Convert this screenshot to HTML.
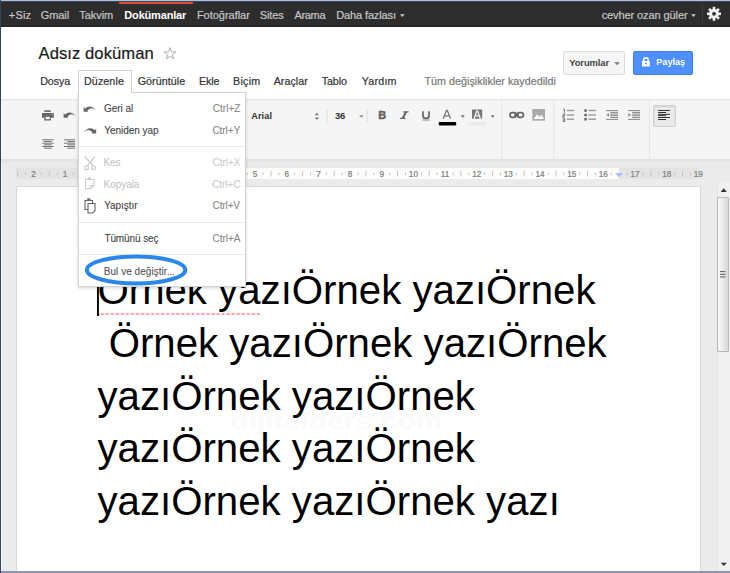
<!DOCTYPE html>
<html><head><meta charset="utf-8"><style>
html,body{margin:0;padding:0;width:730px;height:573px;overflow:hidden;background:#fff;font-family:"Liberation Sans", sans-serif;}
</style></head><body>
<div style="position:absolute;left:0px;top:0px;width:730px;height:1px;background:#b4bfd2"></div><div style="position:absolute;left:0px;top:1px;width:730px;height:1px;background:#3a4763"></div><div style="position:absolute;left:1px;top:2px;width:729px;height:25px;background:#2d2d2d"></div><div style="position:absolute;left:1px;top:25px;width:729px;height:2px;background:#262626"></div><div style="position:absolute;left:119px;top:2px;width:74px;height:2px;background:#dd4b39"></div><div style="position:absolute;left:8.86px;top:9.59px;font-size:11px;line-height:11px;height:11px;color:#c8c8c8;font-weight:normal;white-space:pre;-webkit-text-stroke:0.2px #c8c8c8;letter-spacing:0.143px">+Siz</div><div style="position:absolute;left:40.85px;top:9.59px;font-size:11px;line-height:11px;height:11px;color:#c8c8c8;font-weight:normal;white-space:pre;-webkit-text-stroke:0.2px #c8c8c8;letter-spacing:-0.109px">Gmail</div><div style="position:absolute;left:79.25px;top:9.59px;font-size:11px;line-height:11px;height:11px;color:#c8c8c8;font-weight:normal;white-space:pre;-webkit-text-stroke:0.2px #c8c8c8;letter-spacing:-0.054px">Takvim</div><div style="position:absolute;left:124.36px;top:9.59px;font-size:11px;line-height:11px;height:11px;color:#ffffff;font-weight:bold;white-space:pre;letter-spacing:-0.186px">Dokümanlar</div><div style="position:absolute;left:196.90px;top:9.59px;font-size:11px;line-height:11px;height:11px;color:#c8c8c8;font-weight:normal;white-space:pre;-webkit-text-stroke:0.2px #c8c8c8;letter-spacing:-0.020px">Fotoğraflar</div><div style="position:absolute;left:259.80px;top:9.59px;font-size:11px;line-height:11px;height:11px;color:#c8c8c8;font-weight:normal;white-space:pre;-webkit-text-stroke:0.2px #c8c8c8;letter-spacing:-0.114px">Sites</div><div style="position:absolute;left:294.38px;top:9.59px;font-size:11px;line-height:11px;height:11px;color:#c8c8c8;font-weight:normal;white-space:pre;-webkit-text-stroke:0.2px #c8c8c8;letter-spacing:-0.319px">Arama</div><div style="position:absolute;left:336.30px;top:9.59px;font-size:11px;line-height:11px;height:11px;color:#c8c8c8;font-weight:normal;white-space:pre;-webkit-text-stroke:0.2px #c8c8c8;letter-spacing:-0.136px">Daha fazlası</div><div style="position:absolute;left:601.63px;top:9.59px;font-size:11px;line-height:11px;height:11px;color:#c8c8c8;font-weight:normal;white-space:pre;-webkit-text-stroke:0.2px #c8c8c8;letter-spacing:-0.093px">cevher ozan güler</div><div style="position:absolute;left:702px;top:4px;width:1px;height:19px;background:#3d3d3d"></div><svg style="position:absolute;left:0;top:0" width="730" height="573" viewBox="0 0 730 573"><path d="M399.9 14.3h4.8l-2.4 2.7z" fill="#c8c8c8"/><path d="M691.1 14.3h4.8l-2.4 2.7z" fill="#c8c8c8"/><g transform="translate(714 13.8)" fill="#f0f0f0"><rect x="-1.3" y="-7" width="2.6" height="4" transform="rotate(0)"/><rect x="-1.3" y="-7" width="2.6" height="4" transform="rotate(45)"/><rect x="-1.3" y="-7" width="2.6" height="4" transform="rotate(90)"/><rect x="-1.3" y="-7" width="2.6" height="4" transform="rotate(135)"/><rect x="-1.3" y="-7" width="2.6" height="4" transform="rotate(180)"/><rect x="-1.3" y="-7" width="2.6" height="4" transform="rotate(225)"/><rect x="-1.3" y="-7" width="2.6" height="4" transform="rotate(270)"/><rect x="-1.3" y="-7" width="2.6" height="4" transform="rotate(315)"/><circle r="4.9"/><circle r="1.9" fill="#2d2d2d"/></g></svg><div style="position:absolute;left:1px;top:27px;width:729px;height:72px;background:#ffffff"></div><div style="position:absolute;left:38.57px;top:45.95px;font-size:16.6px;line-height:16.6px;height:16.6px;color:#1a1a1a;font-weight:normal;white-space:pre;-webkit-text-stroke:0.2px #1a1a1a;letter-spacing:0.066px">Adsız doküman</div><svg style="position:absolute;left:0;top:0" width="730" height="573" viewBox="0 0 730 573"><path d="M170 47.6l1.55 4.3h4.55l-3.7 2.75 1.4 4.35-3.8-2.7-3.8 2.7 1.4-4.35-3.7-2.75h4.55z" fill="none" stroke="#aaa" stroke-width="0.9" stroke-linejoin="miter"/></svg><div style="position:absolute;left:40.22px;top:76.34px;font-size:10.7px;line-height:10.7px;height:10.7px;color:#333;font-weight:normal;white-space:pre;-webkit-text-stroke:0.2px #333;letter-spacing:-0.088px">Dosya</div><div style="position:absolute;left:137.66px;top:76.34px;font-size:10.7px;line-height:10.7px;height:10.7px;color:#333;font-weight:normal;white-space:pre;-webkit-text-stroke:0.2px #333;letter-spacing:0.065px">Görüntüle</div><div style="position:absolute;left:199.02px;top:76.34px;font-size:10.7px;line-height:10.7px;height:10.7px;color:#333;font-weight:normal;white-space:pre;-webkit-text-stroke:0.2px #333;letter-spacing:-0.154px">Ekle</div><div style="position:absolute;left:233.02px;top:76.34px;font-size:10.7px;line-height:10.7px;height:10.7px;color:#333;font-weight:normal;white-space:pre;-webkit-text-stroke:0.2px #333;letter-spacing:0.257px">Biçim</div><div style="position:absolute;left:273.68px;top:76.34px;font-size:10.7px;line-height:10.7px;height:10.7px;color:#333;font-weight:normal;white-space:pre;-webkit-text-stroke:0.2px #333;letter-spacing:0.051px">Araçlar</div><div style="position:absolute;left:321.66px;top:76.34px;font-size:10.7px;line-height:10.7px;height:10.7px;color:#333;font-weight:normal;white-space:pre;-webkit-text-stroke:0.2px #333;letter-spacing:-0.069px">Tablo</div><div style="position:absolute;left:361.76px;top:76.34px;font-size:10.7px;line-height:10.7px;height:10.7px;color:#333;font-weight:normal;white-space:pre;-webkit-text-stroke:0.2px #333;letter-spacing:0.211px">Yardım</div><div style="position:absolute;left:424.56px;top:76.34px;font-size:10.7px;line-height:10.7px;height:10.7px;color:#777;font-weight:normal;white-space:pre;-webkit-text-stroke:0.2px #777;letter-spacing:0.045px">Tüm değişiklikler kaydedildi</div><div style="position:absolute;left:563px;top:51px;width:62px;height:24px;background:#f5f5f5;border:1px solid #dcdcdc;box-sizing:border-box;border-radius:2px"></div><div style="position:absolute;left:569.24px;top:58.24px;font-size:9.4px;line-height:9.4px;height:9.4px;color:#444;font-weight:bold;white-space:pre;letter-spacing:-0.095px">Yorumlar</div><svg style="position:absolute;left:0;top:0" width="730" height="573" viewBox="0 0 730 573"><path d="M614.2 62.2h5.8l-2.9 3z" fill="#777"/></svg><div style="position:absolute;left:633px;top:51px;width:60px;height:24px;background:#4d90fe;border:1px solid #3d80ee;box-sizing:border-box;border-radius:2px"></div><div style="position:absolute;left:656.28px;top:58.11px;font-size:9.2px;line-height:9.2px;height:9.2px;color:#fff;font-weight:bold;white-space:pre;letter-spacing:-0.053px">Paylaş</div><svg style="position:absolute;left:0;top:0" width="730" height="573" viewBox="0 0 730 573"><path d="M643.6 61.2v-1.2a2.3 2.3 0 0 1 4.6 0v1.2" fill="none" stroke="#fff" stroke-width="1.5"/><rect x="642" y="61" width="7.8" height="5.5" fill="#fff"/><circle cx="645.9" cy="63.6" r="1" fill="#4d90fe"/></svg><div style="position:absolute;left:1px;top:99px;width:729px;height:60px;background:#f5f5f5;border-top:1px solid #e6e6e6;box-sizing:border-box"></div><div style="position:absolute;left:1px;top:100px;width:729px;height:1px;background:#efefef"></div><svg style="position:absolute;left:0;top:0" width="730" height="573" viewBox="0 0 730 573"><rect x="44.3" y="110.3" width="6.4" height="1.6" fill="#666"/><rect x="42" y="113" width="11.8" height="4.8" fill="#666" rx="0.5"/><rect x="44.3" y="116" width="6.6" height="4.5" fill="#666"/><rect x="45.6" y="116.8" width="4.2" height="2.4" fill="#f5f5f5"/><rect x="51.2" y="113.8" width="1" height="1" fill="#ddd"/><g transform="translate(63.6 111.9)"><path d="M1.0 3.0 Q6.6 -2.6 12.6 4.6 Q6.8 -0.4 3.6 5.4 Z" fill="#666"/><path d="M0 1.2 L0 5.9 L4.6 5.9 Z" fill="#666"/></g><rect x="42.1" y="139.35" width="11.6" height="0.9" fill="#666"/><rect x="63.9" y="139.35" width="11.2" height="0.9" fill="#666"/><rect x="43.9" y="141.03" width="7.8" height="0.9" fill="#666"/><rect x="67.3" y="141.03" width="7.8" height="0.9" fill="#666"/><rect x="42.1" y="142.71" width="11.6" height="0.9" fill="#666"/><rect x="63.9" y="142.71" width="11.2" height="0.9" fill="#666"/><rect x="43.9" y="144.39" width="7.8" height="0.9" fill="#666"/><rect x="67.3" y="144.39" width="7.8" height="0.9" fill="#666"/><rect x="42.1" y="146.07" width="11.6" height="0.9" fill="#666"/><rect x="63.9" y="146.07" width="11.2" height="0.9" fill="#666"/><rect x="43.9" y="147.75" width="7.8" height="0.9" fill="#666"/><rect x="67.3" y="147.75" width="7.8" height="0.9" fill="#666"/></svg><div style="position:absolute;left:251.17px;top:111.71px;font-size:9.2px;line-height:9.2px;height:9.2px;color:#333;font-weight:bold;white-space:pre;letter-spacing:0.107px">Arial</div><div style="position:absolute;left:334.98px;top:111.04px;font-size:9.4px;line-height:9.4px;height:9.4px;color:#333;font-weight:bold;white-space:pre;letter-spacing:-0.300px">36</div><svg style="position:absolute;left:0;top:0" width="730" height="573" viewBox="0 0 730 573"><path d="M314.7 115.3h4.4l-2.2-2.5z M314.7 117.4h4.4l-2.2 2.6z" fill="#777"/><rect x="326.5" y="110" width="1" height="12.6" fill="#ddd"/><path d="M359.2 115.4h4.4l-2.2 2.1z" fill="#777"/><rect x="366.6" y="110" width="1" height="12.6" fill="#ddd"/></svg><div style="position:absolute;left:378.30px;top:110.29px;font-size:11px;line-height:11px;height:11px;color:#666;font-weight:bold;white-space:pre;-webkit-text-stroke:0.5px #666">B</div><svg style="position:absolute;left:0;top:0" width="730" height="573" viewBox="0 0 730 573"><path d="M403.5 111.2h5.2l-0.3 1.2h-1.5l-2.8 5.4h1.5l-0.3 1.2h-5.3l0.3-1.2h1.5l2.8-5.4h-1.5z" fill="#666"/><path d="M423 111.2v4.4a3 3 0 0 0 6 0v-4.4" fill="none" stroke="#666" stroke-width="1.7"/><rect x="422.1" y="119.4" width="7.8" height="1.3" fill="#aaa"/><path d="M443.2 118.7l3.3-8.4h0.8l3.3 8.4M444.5 115.9h4.8" fill="none" stroke="#777" stroke-width="1.3"/><rect x="438.7" y="121.9" width="17.5" height="3.5" rx="0.8" fill="#000"/><path d="M460.6 115.3h4.2l-2.1 2.6z" fill="#777"/><rect x="472" y="109.5" width="10.2" height="9.2" fill="#777"/><path d="M474 118.7l2.8-7.6h0.8l2.8 7.6M475.3 115.9h4" fill="none" stroke="#f5f5f5" stroke-width="1.3"/><rect x="468.8" y="121.9" width="17.7" height="3.5" fill="#ebebeb"/><path d="M490.7 115.3h4l-2 2.6z" fill="#777"/><rect x="501.2" y="100" width="1" height="59" fill="#e6e6e6"/><rect x="510" y="112.7" width="6.2" height="4.6" rx="2.3" fill="none" stroke="#666" stroke-width="1.7"/><rect x="517.2" y="112.7" width="6.2" height="4.6" rx="2.3" fill="none" stroke="#666" stroke-width="1.7"/><rect x="514" y="114.3" width="5" height="1.5" fill="#666"/><rect x="532.3" y="109" width="12.7" height="11.7" fill="#aaa"/><path d="M533.6 119l3.4-4.6 2.4 2.5 2-2.2 2.6 4.3z" fill="#fff"/><rect x="553.2" y="100" width="1" height="59" fill="#e6e6e6"/><rect x="566.8" y="109.8" width="7.3" height="1.4" fill="#999"/><rect x="588.5" y="109.8" width="7.4" height="1.4" fill="#999"/><rect x="584.3" y="109.3" width="2.5" height="2.5" fill="#666"/><rect x="566.8" y="114.3" width="7.3" height="1.4" fill="#999"/><rect x="588.5" y="114.3" width="7.4" height="1.4" fill="#999"/><rect x="584.3" y="113.8" width="2.5" height="2.5" fill="#666"/><rect x="566.8" y="118.5" width="7.3" height="1.4" fill="#999"/><rect x="588.5" y="118.5" width="7.4" height="1.4" fill="#999"/><rect x="584.3" y="118.0" width="2.5" height="2.5" fill="#666"/><path d="M563.2 109.2h1.2v3.6M562.6 114h2.2v1.6h-2v1.6h2.2M562.6 118.8h2.2v2.6h-2.2M562.8 120.1h1.8" fill="none" stroke="#666" stroke-width="0.9"/><rect x="606" y="110.1" width="12" height="1" fill="#888"/><rect x="610.2" y="111.9" width="7.8" height="1" fill="#888"/><rect x="610.2" y="113.6" width="7.8" height="1" fill="#888"/><rect x="610.2" y="115.2" width="7.8" height="1" fill="#888"/><rect x="610.2" y="117.0" width="7.8" height="1" fill="#888"/><rect x="606" y="118.9" width="12" height="1" fill="#888"/><path d="M609 113v3.8l-2.6-1.9z" fill="#888"/><rect x="628" y="110.1" width="12" height="1" fill="#888"/><rect x="632.2" y="111.9" width="7.8" height="1" fill="#888"/><rect x="632.2" y="113.6" width="7.8" height="1" fill="#888"/><rect x="632.2" y="115.2" width="7.8" height="1" fill="#888"/><rect x="632.2" y="117.0" width="7.8" height="1" fill="#888"/><rect x="628" y="118.9" width="12" height="1" fill="#888"/><path d="M628.4 113v3.8l2.6-1.9z" fill="#888"/><rect x="649" y="100" width="1" height="59" fill="#e6e6e6"/></svg><div style="position:absolute;left:653px;top:105px;width:23px;height:21.5px;background:#eaeaea;border:1px solid #d0d0d0;box-sizing:border-box;border-radius:2px;box-shadow:inset 0 1px 2px rgba(0,0,0,0.1)"></div><svg style="position:absolute;left:0;top:0" width="730" height="573" viewBox="0 0 730 573"><rect x="658.1" y="110.0" width="11.8" height="1" fill="#333"/><rect x="658.1" y="112.0" width="7.9" height="1" fill="#333"/><rect x="658.1" y="113.8" width="11.8" height="1" fill="#333"/><rect x="658.1" y="115.1" width="7.9" height="1" fill="#333"/><rect x="658.1" y="117.0" width="11.8" height="1" fill="#333"/><rect x="658.1" y="119.0" width="7.9" height="1" fill="#333"/></svg><div style="position:absolute;left:1px;top:159px;width:729px;height:412px;background:#ebebeb"></div><div style="position:absolute;left:1px;top:159px;width:1px;height:412px;background:#f6f6f6"></div><div style="position:absolute;left:1px;top:159px;width:729px;height:5px;background:linear-gradient(#e2e2e2,#ebebeb)"></div><div style="position:absolute;left:16px;top:167.6px;width:683px;height:11.2px;background:#e3e3e3"></div><div style="position:absolute;left:96.8px;top:167.6px;width:522.5px;height:11.2px;background:#fdfdfd"></div><svg style="position:absolute;left:0;top:0" width="730" height="573" viewBox="0 0 730 573"><rect x="17.15" y="171" width="1" height="5.5" fill="#c4c4c4"/><rect x="25.06" y="172.4" width="1" height="2.8" fill="#c4c4c4"/><text x="33.48" y="176.9" font-size="8.2" fill="#808080" stroke="#808080" stroke-width="0.2" text-anchor="middle" font-family="Liberation Sans, sans-serif">2</text><rect x="40.89" y="172.4" width="1" height="2.8" fill="#c4c4c4"/><rect x="48.81" y="171" width="1" height="5.5" fill="#c4c4c4"/><rect x="56.72" y="172.4" width="1" height="2.8" fill="#c4c4c4"/><text x="65.14" y="176.9" font-size="8.2" fill="#808080" stroke="#808080" stroke-width="0.2" text-anchor="middle" font-family="Liberation Sans, sans-serif">1</text><rect x="72.55" y="172.4" width="1" height="2.8" fill="#c4c4c4"/><rect x="80.47" y="171" width="1" height="5.5" fill="#c4c4c4"/><rect x="88.38" y="172.4" width="1" height="2.8" fill="#c4c4c4"/><rect x="104.22" y="172.4" width="1" height="2.8" fill="#c4c4c4"/><rect x="112.13" y="171" width="1" height="5.5" fill="#c4c4c4"/><rect x="120.05" y="172.4" width="1" height="2.8" fill="#c4c4c4"/><text x="128.46" y="176.9" font-size="8.2" fill="#808080" stroke="#808080" stroke-width="0.2" text-anchor="middle" font-family="Liberation Sans, sans-serif">1</text><rect x="135.88" y="172.4" width="1" height="2.8" fill="#c4c4c4"/><rect x="143.79" y="171" width="1" height="5.5" fill="#c4c4c4"/><rect x="151.70" y="172.4" width="1" height="2.8" fill="#c4c4c4"/><text x="160.12" y="176.9" font-size="8.2" fill="#808080" stroke="#808080" stroke-width="0.2" text-anchor="middle" font-family="Liberation Sans, sans-serif">2</text><rect x="167.53" y="172.4" width="1" height="2.8" fill="#c4c4c4"/><rect x="175.45" y="171" width="1" height="5.5" fill="#c4c4c4"/><rect x="183.37" y="172.4" width="1" height="2.8" fill="#c4c4c4"/><text x="191.78" y="176.9" font-size="8.2" fill="#808080" stroke="#808080" stroke-width="0.2" text-anchor="middle" font-family="Liberation Sans, sans-serif">3</text><rect x="199.19" y="172.4" width="1" height="2.8" fill="#c4c4c4"/><rect x="207.11" y="171" width="1" height="5.5" fill="#c4c4c4"/><rect x="215.02" y="172.4" width="1" height="2.8" fill="#c4c4c4"/><text x="223.44" y="176.9" font-size="8.2" fill="#808080" stroke="#808080" stroke-width="0.2" text-anchor="middle" font-family="Liberation Sans, sans-serif">4</text><rect x="230.86" y="172.4" width="1" height="2.8" fill="#c4c4c4"/><rect x="238.77" y="171" width="1" height="5.5" fill="#c4c4c4"/><rect x="246.69" y="172.4" width="1" height="2.8" fill="#c4c4c4"/><text x="255.10" y="176.9" font-size="8.2" fill="#808080" stroke="#808080" stroke-width="0.2" text-anchor="middle" font-family="Liberation Sans, sans-serif">5</text><rect x="262.51" y="172.4" width="1" height="2.8" fill="#c4c4c4"/><rect x="270.43" y="171" width="1" height="5.5" fill="#c4c4c4"/><rect x="278.34" y="172.4" width="1" height="2.8" fill="#c4c4c4"/><text x="286.76" y="176.9" font-size="8.2" fill="#808080" stroke="#808080" stroke-width="0.2" text-anchor="middle" font-family="Liberation Sans, sans-serif">6</text><rect x="294.18" y="172.4" width="1" height="2.8" fill="#c4c4c4"/><rect x="302.09" y="171" width="1" height="5.5" fill="#c4c4c4"/><rect x="310.00" y="172.4" width="1" height="2.8" fill="#c4c4c4"/><text x="318.42" y="176.9" font-size="8.2" fill="#808080" stroke="#808080" stroke-width="0.2" text-anchor="middle" font-family="Liberation Sans, sans-serif">7</text><rect x="325.83" y="172.4" width="1" height="2.8" fill="#c4c4c4"/><rect x="333.75" y="171" width="1" height="5.5" fill="#c4c4c4"/><rect x="341.67" y="172.4" width="1" height="2.8" fill="#c4c4c4"/><text x="350.08" y="176.9" font-size="8.2" fill="#808080" stroke="#808080" stroke-width="0.2" text-anchor="middle" font-family="Liberation Sans, sans-serif">8</text><rect x="357.50" y="172.4" width="1" height="2.8" fill="#c4c4c4"/><rect x="365.41" y="171" width="1" height="5.5" fill="#c4c4c4"/><rect x="373.32" y="172.4" width="1" height="2.8" fill="#c4c4c4"/><text x="381.74" y="176.9" font-size="8.2" fill="#808080" stroke="#808080" stroke-width="0.2" text-anchor="middle" font-family="Liberation Sans, sans-serif">9</text><rect x="389.16" y="172.4" width="1" height="2.8" fill="#c4c4c4"/><rect x="397.07" y="171" width="1" height="5.5" fill="#c4c4c4"/><rect x="404.99" y="172.4" width="1" height="2.8" fill="#c4c4c4"/><text x="413.40" y="176.9" font-size="8.2" fill="#808080" stroke="#808080" stroke-width="0.2" text-anchor="middle" font-family="Liberation Sans, sans-serif">10</text><rect x="420.81" y="172.4" width="1" height="2.8" fill="#c4c4c4"/><rect x="428.73" y="171" width="1" height="5.5" fill="#c4c4c4"/><rect x="436.65" y="172.4" width="1" height="2.8" fill="#c4c4c4"/><text x="445.06" y="176.9" font-size="8.2" fill="#808080" stroke="#808080" stroke-width="0.2" text-anchor="middle" font-family="Liberation Sans, sans-serif">11</text><rect x="452.48" y="172.4" width="1" height="2.8" fill="#c4c4c4"/><rect x="460.39" y="171" width="1" height="5.5" fill="#c4c4c4"/><rect x="468.31" y="172.4" width="1" height="2.8" fill="#c4c4c4"/><text x="476.72" y="176.9" font-size="8.2" fill="#808080" stroke="#808080" stroke-width="0.2" text-anchor="middle" font-family="Liberation Sans, sans-serif">12</text><rect x="484.13" y="172.4" width="1" height="2.8" fill="#c4c4c4"/><rect x="492.05" y="171" width="1" height="5.5" fill="#c4c4c4"/><rect x="499.97" y="172.4" width="1" height="2.8" fill="#c4c4c4"/><text x="508.38" y="176.9" font-size="8.2" fill="#808080" stroke="#808080" stroke-width="0.2" text-anchor="middle" font-family="Liberation Sans, sans-serif">13</text><rect x="515.79" y="172.4" width="1" height="2.8" fill="#c4c4c4"/><rect x="523.71" y="171" width="1" height="5.5" fill="#c4c4c4"/><rect x="531.62" y="172.4" width="1" height="2.8" fill="#c4c4c4"/><text x="540.04" y="176.9" font-size="8.2" fill="#808080" stroke="#808080" stroke-width="0.2" text-anchor="middle" font-family="Liberation Sans, sans-serif">14</text><rect x="547.46" y="172.4" width="1" height="2.8" fill="#c4c4c4"/><rect x="555.37" y="171" width="1" height="5.5" fill="#c4c4c4"/><rect x="563.28" y="172.4" width="1" height="2.8" fill="#c4c4c4"/><text x="571.70" y="176.9" font-size="8.2" fill="#808080" stroke="#808080" stroke-width="0.2" text-anchor="middle" font-family="Liberation Sans, sans-serif">15</text><rect x="579.12" y="172.4" width="1" height="2.8" fill="#c4c4c4"/><rect x="587.03" y="171" width="1" height="5.5" fill="#c4c4c4"/><rect x="594.94" y="172.4" width="1" height="2.8" fill="#c4c4c4"/><text x="603.36" y="176.9" font-size="8.2" fill="#808080" stroke="#808080" stroke-width="0.2" text-anchor="middle" font-family="Liberation Sans, sans-serif">16</text><rect x="610.77" y="172.4" width="1" height="2.8" fill="#c4c4c4"/><rect x="626.60" y="172.4" width="1" height="2.8" fill="#c4c4c4"/><text x="635.02" y="176.9" font-size="8.2" fill="#808080" stroke="#808080" stroke-width="0.2" text-anchor="middle" font-family="Liberation Sans, sans-serif">17</text><rect x="642.43" y="172.4" width="1" height="2.8" fill="#c4c4c4"/><rect x="650.35" y="171" width="1" height="5.5" fill="#c4c4c4"/><rect x="658.26" y="172.4" width="1" height="2.8" fill="#c4c4c4"/><text x="666.68" y="176.9" font-size="8.2" fill="#808080" stroke="#808080" stroke-width="0.2" text-anchor="middle" font-family="Liberation Sans, sans-serif">18</text><rect x="674.09" y="172.4" width="1" height="2.8" fill="#c4c4c4"/><rect x="682.01" y="171" width="1" height="5.5" fill="#c4c4c4"/><rect x="689.92" y="172.4" width="1" height="2.8" fill="#c4c4c4"/><text x="698.34" y="176.9" font-size="8.2" fill="#808080" stroke="#808080" stroke-width="0.2" text-anchor="middle" font-family="Liberation Sans, sans-serif">19</text><path d="M615.2 173.1h7.8l-3.9 4.4z" fill="#a2c0f2"/></svg><div style="position:absolute;left:16.5px;top:187px;width:683.5px;height:384px;background:#fff;box-shadow:0 0 0 1px #dadada"></div><div style="position:absolute;left:716.5px;top:182px;width:13px;height:389px;background:#f0f0f0;border-left:1px solid #e2e2e2;box-sizing:border-box"></div><svg style="position:absolute;left:0;top:0" width="730" height="573" viewBox="0 0 730 573"><path d="M720.7 191.9h6.1l-3.05-3.6z" fill="#333"/><path d="M720.8 562.8h6.1l-3.05 3.2z" fill="#333"/></svg><div style="position:absolute;left:717px;top:197.4px;width:11.6px;height:154.2px;background:linear-gradient(to right,#fafafa,#d8d8d8);border:1px solid #b8b8b8;box-sizing:border-box;border-radius:1px"></div><svg style="position:absolute;left:0;top:0" width="730" height="573" viewBox="0 0 730 573"><rect x="720" y="271" width="5.5" height="1.1" fill="#666"/><rect x="720" y="273.8" width="5.5" height="1.1" fill="#666"/><rect x="720" y="276.4" width="5.5" height="1.1" fill="#666"/></svg><div style="position:absolute;left:229.50px;top:410.03px;font-size:23px;line-height:23px;height:23px;color:#fafafa;font-weight:bold;white-space:pre;transform:scaleX(1.31);transform-origin:0 0">dijitalders.com</div><div style="position:absolute;left:97.50px;top:271.17px;font-size:40.2px;line-height:40.2px;height:40.2px;color:#000;font-weight:normal;white-space:pre;">Örnek yazıÖrnek yazıÖrnek</div><div style="position:absolute;left:97.50px;top:323.87px;font-size:40.2px;line-height:40.2px;height:40.2px;color:#000;font-weight:normal;white-space:pre;"> Örnek yazıÖrnek yazıÖrnek</div><div style="position:absolute;left:97.50px;top:376.57px;font-size:40.2px;line-height:40.2px;height:40.2px;color:#000;font-weight:normal;white-space:pre;">yazıÖrnek yazıÖrnek</div><div style="position:absolute;left:97.50px;top:429.27px;font-size:40.2px;line-height:40.2px;height:40.2px;color:#000;font-weight:normal;white-space:pre;">yazıÖrnek yazıÖrnek</div><div style="position:absolute;left:97.50px;top:481.97px;font-size:40.2px;line-height:40.2px;height:40.2px;color:#000;font-weight:normal;white-space:pre;">yazıÖrnek yazıÖrnek yazı</div><svg style="position:absolute;left:0;top:0" width="730" height="573" viewBox="0 0 730 573"><rect x="98.5" y="313.2" width="162" height="1.8" fill="#ffdede"/><line x1="101.2" y1="314.1" x2="260.5" y2="314.1" stroke="#ff8c8c" stroke-width="1.8" stroke-dasharray="2 3.04"/><rect x="97" y="284" width="1.9" height="32" fill="#000"/></svg><div style="position:absolute;left:0px;top:571px;width:730px;height:2px;background:#8c97ad"></div><div style="position:absolute;left:0px;top:0px;width:1px;height:573px;background:#37445f"></div><div style="position:absolute;left:78px;top:92px;width:168px;height:195px;background:#fff;border:1px solid #d4d4d4;box-sizing:border-box;box-shadow:0 1px 3px rgba(0,0,0,0.18)"></div><div style="position:absolute;left:78px;top:70px;width:54px;height:23px;background:#fff;border:1px solid #cfcfcf;border-bottom:none;box-sizing:border-box"></div><div style="position:absolute;left:84.02px;top:76.34px;font-size:10.7px;line-height:10.7px;height:10.7px;color:#333;font-weight:normal;white-space:pre;-webkit-text-stroke:0.2px #333;letter-spacing:0.099px">Düzenle</div><div style="position:absolute;left:103.90px;top:103.94px;font-size:10.0px;line-height:10.0px;height:10.0px;color:#444;font-weight:normal;white-space:pre;-webkit-text-stroke:0.1px #444;letter-spacing:-0.014px">Geri al</div><div style="position:absolute;left:212.79px;top:103.94px;font-size:10.0px;line-height:10.0px;height:10.0px;color:#888;font-weight:normal;white-space:pre;-webkit-text-stroke:0.1px #888;letter-spacing:0.024px">Ctrl+Z</div><div style="position:absolute;left:104.18px;top:125.63px;font-size:10.0px;line-height:10.0px;height:10.0px;color:#444;font-weight:normal;white-space:pre;-webkit-text-stroke:0.1px #444;letter-spacing:-0.026px">Yeniden yap</div><div style="position:absolute;left:212.39px;top:125.63px;font-size:10.0px;line-height:10.0px;height:10.0px;color:#888;font-weight:normal;white-space:pre;-webkit-text-stroke:0.1px #888;letter-spacing:-0.027px">Ctrl+Y</div><div style="position:absolute;left:103.58px;top:158.03px;font-size:10.0px;line-height:10.0px;height:10.0px;color:#c4c4c4;font-weight:normal;white-space:pre;-webkit-text-stroke:0.1px #c4c4c4;letter-spacing:-0.125px">Kes</div><div style="position:absolute;left:212.59px;top:158.03px;font-size:10.0px;line-height:10.0px;height:10.0px;color:#ccc;font-weight:normal;white-space:pre;-webkit-text-stroke:0.1px #ccc;letter-spacing:-0.089px">Ctrl+X</div><div style="position:absolute;left:103.58px;top:179.63px;font-size:10.0px;line-height:10.0px;height:10.0px;color:#c4c4c4;font-weight:normal;white-space:pre;-webkit-text-stroke:0.1px #c4c4c4;letter-spacing:-0.053px">Kopyala</div><div style="position:absolute;left:212.09px;top:179.63px;font-size:10.0px;line-height:10.0px;height:10.0px;color:#ccc;font-weight:normal;white-space:pre;-webkit-text-stroke:0.1px #ccc;letter-spacing:-0.065px">Ctrl+C</div><div style="position:absolute;left:104.18px;top:201.03px;font-size:10.0px;line-height:10.0px;height:10.0px;color:#444;font-weight:normal;white-space:pre;-webkit-text-stroke:0.1px #444;letter-spacing:-0.053px">Yapıştır</div><div style="position:absolute;left:212.59px;top:201.03px;font-size:10.0px;line-height:10.0px;height:10.0px;color:#888;font-weight:normal;white-space:pre;-webkit-text-stroke:0.1px #888;letter-spacing:-0.122px">Ctrl+V</div><div style="position:absolute;left:104.38px;top:233.94px;font-size:10.0px;line-height:10.0px;height:10.0px;color:#444;font-weight:normal;white-space:pre;-webkit-text-stroke:0.1px #444;letter-spacing:-0.093px">Tümünü seç</div><div style="position:absolute;left:212.49px;top:233.94px;font-size:10.0px;line-height:10.0px;height:10.0px;color:#888;font-weight:normal;white-space:pre;-webkit-text-stroke:0.1px #888;letter-spacing:-0.027px">Ctrl+A</div><div style="position:absolute;left:103.78px;top:266.74px;font-size:10.0px;line-height:10.0px;height:10.0px;color:#555;font-weight:normal;white-space:pre;-webkit-text-stroke:0.1px #555;letter-spacing:0.041px">Bul ve değiştir...</div><div style="position:absolute;left:79px;top:145.5px;width:166px;height:1px;background:#ebebeb"></div><div style="position:absolute;left:79px;top:221.7px;width:166px;height:1px;background:#ebebeb"></div><div style="position:absolute;left:79px;top:253.7px;width:166px;height:1px;background:#ebebeb"></div><svg style="position:absolute;left:0;top:0" width="730" height="573" viewBox="0 0 730 573"><g transform="translate(83.6 105.9)"><path d="M1.0 3.0 Q6.6 -2.6 12.6 4.6 Q6.8 -0.4 3.6 5.4 Z" fill="#666"/><path d="M0 1.2 L0 5.9 L4.6 5.9 Z" fill="#666"/></g><g transform="translate(83.6 127.6) translate(12.6 0) scale(-1 1)"><path d="M1.0 3.0 Q6.6 -2.6 12.6 4.6 Q6.8 -0.4 3.6 5.4 Z" fill="#666"/><path d="M0 1.2 L0 5.9 L4.6 5.9 Z" fill="#666"/></g><g fill="none" stroke="#ccc" stroke-width="1.2"><path d="M85 156.5l7.5 9M95 156.5l-7.5 9"/><circle cx="86.6" cy="167.8" r="1.9"/><circle cx="93.4" cy="167.8" r="1.9"/></g><path d="M85.5 179.5h8.5v6l-3 3h-5.5z M91 188.5v-3h3" fill="none" stroke="#ccc" stroke-width="1.1"/><rect x="88.3" y="177.3" width="2.6" height="2.2" fill="#ccc"/><path d="M85 200.5h7.5v9h-7.5z" fill="#fff" stroke="#666" stroke-width="1.1"/><path d="M88 203.5h7v7.2l-2.4 2.3h-4.6z" fill="#fff" stroke="#666" stroke-width="1.1"/><rect x="87.2" y="198.3" width="3.2" height="2.6" fill="#666"/><ellipse cx="136.1" cy="269.95" rx="49.2" ry="13.45" fill="none" stroke="#2a86e8" stroke-width="4"/></svg>
</body></html>
